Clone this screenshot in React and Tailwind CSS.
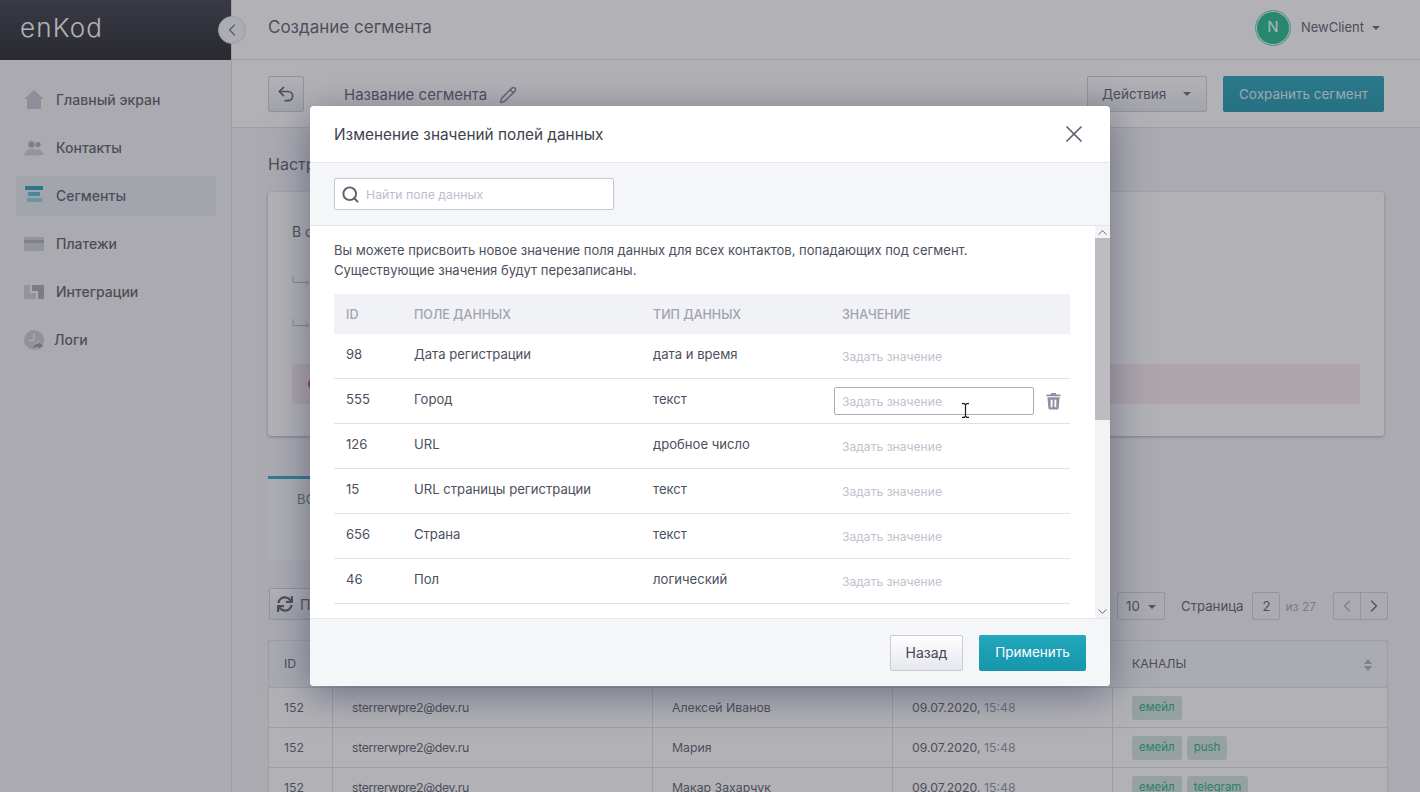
import { ChevronLeft, ChevronRight, ChevronUp, ChevronDown, Pencil, Search, Undo2, X } from 'lucide-react'
import { FaSync } from 'react-icons/fa'

const NAV = [
  { label: 'Главный экран', icon: HomeIcon },
  { label: 'Контакты', icon: ContactsIcon },
  { label: 'Сегменты', icon: SegmentsIcon, active: true },
  { label: 'Платежи', icon: PaymentsIcon },
  { label: 'Интеграции', icon: IntegrationsIcon },
  { label: 'Логи', icon: LogsIcon, tight: true },
]

const FIELDS = [
  { id: 98, name: 'Дата регистрации', type: 'дата и время' },
  { id: 555, name: 'Город', type: 'текст', editing: true },
  { id: 126, name: 'URL', type: 'дробное число' },
  { id: 15, name: 'URL страницы регистрации', type: 'текст' },
  { id: 656, name: 'Страна', type: 'текст' },
  { id: 46, name: 'Пол', type: 'логический' },
]

const CONTACTS = [
  { name: 'Алексей Иванов', channels: ['емейл'] },
  { name: 'Мария', channels: ['емейл', 'push'] },
  { name: 'Макар Захарчук', channels: ['емейл', 'telegram'] },
]

function HomeIcon() {
  return (
    <svg width="20" height="20" viewBox="0 0 20 20" fill="#bfc2ce">
      <path d="M10 0 L20 9 L0 9 Z" />
      <rect x="3" y="9" width="14" height="10" />
    </svg>
  )
}

function ContactsIcon() {
  return (
    <svg width="20" height="15" viewBox="0 0 20 15" fill="#bfc2ce">
      <circle cx="14" cy="3.6" r="2.6" fill="#a4a7b6" />
      <path d="M11 9.5 C14 7.5 18 8.5 20 14 L14 14 Z" fill="#c9ccd7" />
      <circle cx="7.5" cy="3.4" r="3.2" fill="#a4a7b6" />
      <path d="M0 14.5 C1 9.5 4 8 8 8 C12 8 15 9.5 16 14.5 Z" fill="#c9ccd7" />
    </svg>
  )
}

function SegmentsIcon() {
  return (
    <svg width="20" height="20" viewBox="0 0 20 20">
      <rect x="1" y="0" width="18" height="4" fill="#139db5" />
      <rect x="4" y="6" width="12" height="4" fill="#4fb8c9" />
      <rect x="3" y="12" width="15" height="4" fill="#7fd0dc" />
    </svg>
  )
}

function PaymentsIcon() {
  return (
    <svg width="20" height="14" viewBox="0 0 20 14">
      <rect x="0" y="0" width="20" height="14" fill="#c9ccd7" />
      <rect x="0" y="3" width="20" height="3" fill="#a4a7b6" />
    </svg>
  )
}

function IntegrationsIcon() {
  return (
    <svg width="20" height="14" viewBox="0 0 20 14">
      <path d="M0 0 H6 V14 H0 Z" fill="#c9ccd7" />
      <path d="M8 0 H20 V14 H14 V6 H8 Z" fill="#a0a3b3" />
      <path d="M6 8 H12 V14 H6 Z" fill="#c9ccd7" />
    </svg>
  )
}

function LogsIcon() {
  return (
    <svg width="20" height="20" viewBox="0 0 20 20">
      <circle cx="10" cy="10" r="10" fill="#c4c7d3" />
      <path d="M10 4 V10.5 H5" stroke="#f3f4f6" strokeWidth="1.4" fill="none" />
      <path d="M8 20 C8 15 11 13.5 14 13.5 V11 L20 15.5 L14 20 V17.5 C12 17.5 10 18 8 20 Z" fill="#8f92a3" stroke="#f3f4f6" strokeWidth="0.8" />
    </svg>
  )
}

function Caret() {
  return <span className="h-0 w-0 border-x-[4px] border-t-[4px] border-x-transparent border-t-[#5c5f6d]" />
}

function SortCaret() {
  return (
    <span className="flex flex-col gap-[2px]">
      <span className="h-0 w-0 border-x-[4px] border-b-[5px] border-x-transparent border-b-[#a5a8b8]" />
      <span className="h-0 w-0 border-x-[4px] border-t-[5px] border-x-transparent border-t-[#a5a8b8]" />
    </span>
  )
}

function ReturnArrow() {
  return (
    <svg width="18" height="10" viewBox="0 0 18 10" fill="none" stroke="#b3b6c3" strokeWidth="1">
      <path d="M1 0 V6.5 H17 M13.5 3.5 L17 6.5 L13.5 9.5" />
    </svg>
  )
}

function Sidebar() {
  return (
    <aside className="flex w-[232px] shrink-0 flex-col border-r border-[#dcdde2] bg-[#f1f2f4]">
      <div className="flex h-[60px] items-center bg-gradient-to-b from-[#30323f] to-[#141418] pb-[5px] pl-[20px]">
        <span className="text-[26px] font-light tracking-[1.2px] text-white">enKod</span>
      </div>
      <nav className="flex flex-col gap-[8px] pl-[16px] pr-[15px] pt-[20px]">
        {NAV.map((item) => (
          <div
            key={item.label}
            className={`flex h-[40px] items-center rounded-[3px] pl-[8px] text-[14px] font-medium leading-[20px] text-[#51535f] ${item.active ? 'bg-[#e6e9f0]' : ''}`}
          >
            <span className={`flex h-[20px] w-[20px] items-center justify-center ${item.tight ? 'mr-[10px]' : 'mr-[12px]'}`}>
              <item.icon />
            </span>
            {item.label}
          </div>
        ))}
      </nav>
    </aside>
  )
}

function TopBar() {
  return (
    <header className="flex h-[60px] shrink-0 items-center justify-between border-b border-[#dcdde2] bg-white pb-[4px] pl-[36px] pr-[40px]">
      <h1 className="text-[17px] text-[#51535f]">Создание сегмента</h1>
      <div className="flex items-center">
        <div className="flex h-[36px] w-[36px] items-center justify-center rounded-full border border-[#6fd0b4] bg-[#11b685] p-[1px] text-[15px] text-white shadow-[inset_0_0_0_1px_#fff]">
          N
        </div>
        <span className="ml-[10px] pt-[1px] text-[13px] text-[#51535f]">NewClient</span>
        <span className="ml-[8px] flex">
          <Caret />
        </span>
      </div>
    </header>
  )
}

function ActionBar() {
  return (
    <div className="flex h-[68px] shrink-0 items-center justify-between border-b border-[#dcdde2] bg-white px-[36px]">
      <div className="flex items-center">
        <button className="flex h-[36px] w-[36px] items-center justify-center rounded-[2px] border border-[#c9cbd6] bg-gradient-to-b from-white to-[#e6e7ed] text-[#51535f]">
          <Undo2 size={20} strokeWidth={2} />
        </button>
        <span className="ml-[40px] mt-[4px] text-[15px] text-[#51535f]">Название сегмента</span>
        <Pencil size={18} className="ml-[12px] mt-[2px] text-[#7c7f8e]" />
      </div>
      <div className="flex items-center gap-[16px]">
        <button className="flex h-[36px] w-[120px] items-center justify-between rounded-[2px] border border-[#c9cbd6] bg-gradient-to-b from-white to-[#e6e7ed] pl-[14px] pr-[15px] pt-[1px] text-[13.5px] text-[#51535f]">
          Действия
          <Caret />
        </button>
        <button className="h-[36px] w-[161px] rounded-[2px] bg-gradient-to-b from-[#139db5] to-[#118fa6] pt-[1px] text-[13.5px] text-[#d9eef2]">
          Сохранить сегмент
        </button>
      </div>
    </div>
  )
}

function SettingsCard() {
  return (
    <div className="h-[244px] rounded-[3px] bg-white px-[24px] pt-[30px] shadow-[0_1px_3px_rgba(60,65,90,0.45)]">
      <p className="text-[14px] leading-[20px] text-[#51535f]">В сегмент попадают контакты</p>
      <div className="mt-[31px] flex h-[15px] items-center">
        <ReturnArrow />
      </div>
      <div className="mt-[28px] flex h-[15px] items-center">
        <ReturnArrow />
      </div>
      <div className="mt-[33px] flex h-[40px] items-center rounded-[3px] bg-[#f6e9ea] pl-[16px]">
        <span className="h-[12px] w-[12px] rounded-full bg-[#e23c3c]" />
      </div>
    </div>
  )
}

function Pagination() {
  return (
    <div className="mt-[4px] flex items-center text-[13.2px] text-[#51535f]">
      <div className="flex h-[28px] w-[48px] items-center justify-between rounded-[2px] border border-[#c9cbd6] px-[8px] pt-[1px]">
        10
        <Caret />
      </div>
      <span className="ml-[16px] pt-[1px]">Страница</span>
      <div className="ml-[9px] flex h-[28px] w-[28px] items-center justify-center rounded-[2px] border border-[#c9cbd6] pt-[1px]">2</div>
      <span className="ml-[5px] pt-[1px] text-[12px] text-[#9fa2b0]">из 27</span>
      <div className="ml-[17px] flex h-[28px] w-[55px] rounded-[2px] border border-[#c9cbd6]">
        <span className="flex flex-1 items-center justify-center border-r border-[#c9cbd6] text-[#a6a9b6]">
          <ChevronLeft size={20} strokeWidth={1.5} />
        </span>
        <span className="flex flex-1 items-center justify-center">
          <ChevronRight size={20} strokeWidth={1.5} />
        </span>
      </div>
    </div>
  )
}

function ContactsTable() {
  const cols = 'grid grid-cols-[64px_320px_240px_220px_1fr]'
  return (
    <div className="mt-[20px] w-[1120px] border border-b-0 border-[#dcdde2] text-[12.3px] text-[#51535f]">
      <div className={`${cols} h-[47px] items-center border-b border-[#dcdde2] bg-[#f2f3f6] pt-[1px]`}>
        <span className="pl-[15px]">ID</span>
        <span className="pl-[19px]">EMAIL</span>
        <span className="pl-[19px]">ИМЯ</span>
        <span className="pl-[19px]">ДАТА</span>
        <span className="flex items-center justify-between pl-[19px] pr-[15px]">
          КАНАЛЫ
          <SortCaret />
        </span>
      </div>
      {CONTACTS.map((row) => (
        <div key={row.name} className={`${cols} h-[40px] items-center border-b border-[#dcdde2] bg-white`}>
          <span className="flex h-full items-center border-r border-[#dcdde2] pl-[15px] pt-[2px]">152</span>
          <span className="flex h-full items-center border-r border-[#dcdde2] pl-[19px] pt-[2px] tracking-[-0.35px]">sterrerwpre2@dev.ru</span>
          <span className="flex h-full items-center border-r border-[#dcdde2] pl-[19px] pt-[2px]">{row.name}</span>
          <span className="flex h-full items-center border-r border-[#dcdde2] pl-[19px] pt-[2px]">
            09.07.2020,&nbsp;<span className="text-[#8a8c99]">15:48</span>
          </span>
          <span className="flex items-center gap-[5px] pl-[19px] pt-[1px]">
            {row.channels.map((channel) => (
              <span key={channel} className="rounded-[3px] bg-[#cfe2dd] px-[7px] py-[3px] text-[11.5px] text-[#16a87e]">
                {channel}
              </span>
            ))}
          </span>
        </div>
      ))}
    </div>
  )
}

function Page() {
  return (
    <main className="flex min-w-0 flex-1 flex-col overflow-hidden">
      <TopBar />
      <ActionBar />
      <section className="px-[36px] pt-[24px]">
        <h2 className="mb-[16px] text-[16px] leading-[24px] text-[#51535f]">Настройки сегмента</h2>
        <SettingsCard />
        <div className="mt-[40px] h-[84px] w-[180px] border-t-[3px] border-[#1fa3b9] bg-[#f9fafb] pl-[29px] pt-[11px] text-[13px] tracking-[0.3px] text-[#6a6c7a]">
          ВСЕ КОНТАКТЫ
        </div>
        <div className="mt-[28px] flex h-[32px] w-[1120px] items-center justify-between">
          <button className="ml-[1px] flex h-[32px] items-center gap-[7px] rounded-[2px] border border-[#c9cbd6] bg-gradient-to-b from-white to-[#e6e7ed] px-[7px] text-[14px] text-[#51535f]">
            <FaSync size={16} />
            Пересчитать
          </button>
          <Pagination />
        </div>
        <ContactsTable />
      </section>
    </main>
  )
}

function ValueCell({ editing }) {
  return (
    <div className="flex h-[36px] items-center self-start pl-[4px] pt-[8px]">
      <div
        className={`flex h-[28px] w-[200px] items-center rounded-[2px] border pl-[7px] pt-[1px] text-[12.1px] text-[#c0c2cd] ${editing ? 'border-[#a9abb9]' : 'border-transparent'}`}
      >
        Задать значение
      </div>
      {editing && (
        <svg className="ml-[12px]" width="15" height="17" viewBox="0 0 16 18" fill="#8d90a0">
          <path d="M5.5 0 H10.5 L11 1.5 H15.5 V3.5 H0.5 V1.5 H5 Z" />
          <path fillRule="evenodd" d="M1.5 4.5 H14.5 L13.5 16 Q13.4 17.5 12 17.5 H4 Q2.6 17.5 2.5 16 Z M5 7 V15 H7 V7 Z M9 7 V15 H11 V7 Z" />
        </svg>
      )}
    </div>
  )
}

function FieldsTable() {
  const cols = 'grid grid-cols-[68px_239px_189px_1fr]'
  return (
    <div className="mt-[14px] w-[736px] text-[13.1px] text-[#4c4f5c]">
      <div className={`${cols} h-[40px] items-center bg-[#f1f2f5] pt-[2px] text-[12.5px] font-medium text-[#a0a2b1]`}>
        <span className="pl-[12px]">ID</span>
        <span className="pl-[12px]">ПОЛЕ ДАННЫХ</span>
        <span className="pl-[12px]">ТИП ДАННЫХ</span>
        <span className="pl-[12px]">ЗНАЧЕНИЕ</span>
      </div>
      {FIELDS.map((field) => (
        <div key={field.id} className={`${cols} h-[45px] border-b border-[#dfe1e7] leading-[20px]`}>
          <span className="pl-[12px] pt-[10px]">{field.id}</span>
          <span className="pl-[12px] pt-[10px]">{field.name}</span>
          <span className="pl-[12px] pt-[10px]">{field.type}</span>
          <ValueCell editing={field.editing} />
        </div>
      ))}
    </div>
  )
}

function Modal() {
  return (
    <div className="flex h-[580px] w-[800px] flex-col overflow-hidden rounded-[4px] bg-white shadow-[0_8px_40px_rgba(50,55,85,0.55)]">
      <div className="flex h-[56px] shrink-0 items-center justify-between pl-[24px] pr-[22px]">
        <h3 className="pt-[2px] text-[15.35px] font-normal text-[#3f424e]">Изменение значений полей данных</h3>
        <X size={28} strokeWidth={1.5} className="text-[#5f6270]" />
      </div>
      <div className="flex h-[64px] shrink-0 items-center border-y border-[#e3e5ea] bg-[#f5f6f8] px-[24px]">
        <div className="flex h-[32px] w-[280px] items-center rounded-[2px] border border-[#c5c7d3] bg-white pl-[6px] text-[12.3px] text-[#bcbeca]">
          <Search size={19} strokeWidth={2.5} className="mr-[6px] text-[#5f6270]" />
          <span className="pt-[2px]">Найти поле данных</span>
        </div>
      </div>
      <div className="flex min-h-0 flex-1">
        <div className="min-w-0 flex-1 overflow-hidden pl-[24px] pt-[14px]">
          <p className="text-[13px] leading-[20px] text-[#4c4f5c]">
            Вы можете присвоить новое значение поля данных для всех контактов, попадающих под сегмент.
            <br />
            Существующие значения будут перезаписаны.
          </p>
          <FieldsTable />
        </div>
        <div className="flex w-[15px] shrink-0 flex-col bg-[#f3f3f6]">
          <div className="flex h-[12px] items-center justify-center">
            <ChevronUp size={15} strokeWidth={1.5} className="text-[#5f6270]" />
          </div>
          <div className="h-[182px] bg-[#bcbcc1]" />
          <div className="flex-1" />
          <div className="flex h-[14px] items-center justify-center">
            <ChevronDown size={15} strokeWidth={1.5} className="text-[#5f6270]" />
          </div>
        </div>
      </div>
      <div className="flex h-[68px] shrink-0 items-center justify-end gap-[16px] border-t border-[#e3e5ea] bg-[#f5f6f8] pr-[24px]">
        <button className="h-[36px] w-[73px] rounded-[2px] border border-[#c9cbd6] bg-gradient-to-b from-white to-[#e6e7ed] text-[14px] text-[#464955]">
          Назад
        </button>
        <button className="h-[36px] w-[107px] rounded-[2px] bg-gradient-to-b from-[#22a7bd] to-[#1596ac] text-[13.5px] text-white">
          Применить
        </button>
      </div>
    </div>
  )
}

export default function App() {
  return (
    <div className="relative flex h-[792px] w-[1420px] overflow-hidden bg-[#f1f2f4] [font-family:Inter,sans-serif]">
      <Sidebar />
      <Page />
      {/* collapse toggle sits over the sidebar edge */}
      <div className="absolute left-[218px] top-[16px] flex h-[28px] w-[28px] items-center justify-center rounded-full border border-[#d8dae1] bg-[#f5f6f8] text-[#6a6d7b]">
        <ChevronLeft size={20} strokeWidth={1.5} />
      </div>
      <div className="absolute inset-0 flex items-center justify-center bg-[rgba(72,72,80,0.42)]">
        <Modal />
      </div>
      {/* text cursor from the capture */}
      <svg className="absolute left-[961px] top-[403px]" width="9" height="15" viewBox="0 0 9 15" fill="none" stroke="#1a1a1a" strokeWidth="1.2">
        <path d="M1 0.7 H3.4 L4.5 1.8 L5.6 0.7 H8 M4.5 1.8 V13.2 M1 14.3 H3.4 L4.5 13.2 L5.6 14.3 H8" />
      </svg>
    </div>
  )
}
